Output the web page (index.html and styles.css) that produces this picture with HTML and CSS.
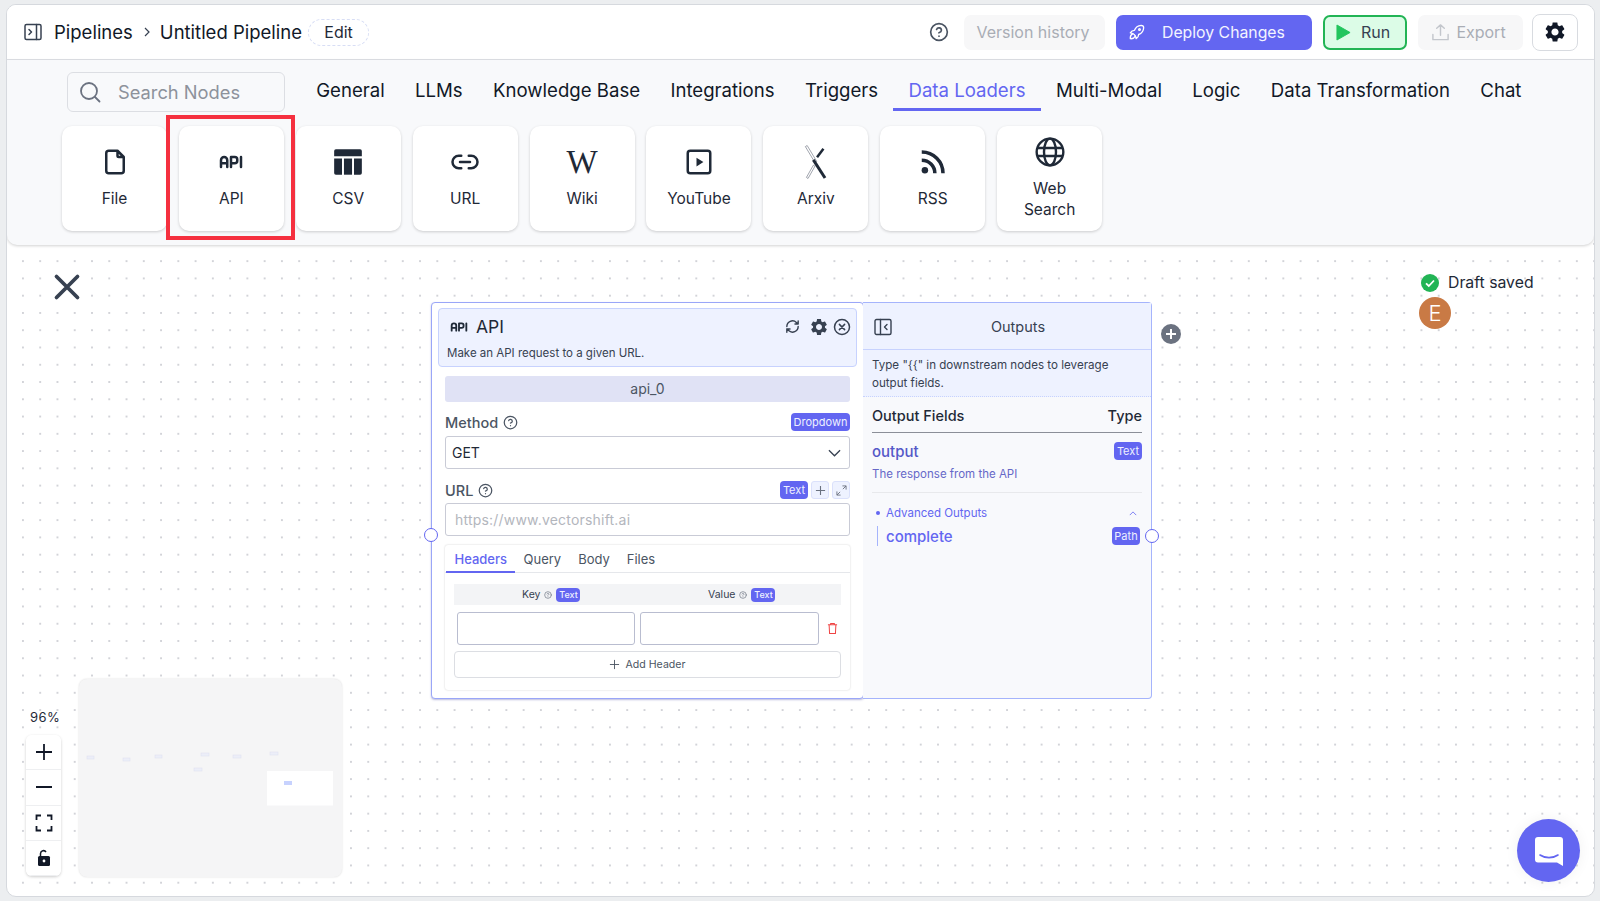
FILE: index.html
```html
<!DOCTYPE html>
<html lang="en">
<head>
    <meta charset="UTF-8">
    <meta name="viewport" content="width=device-width, initial-scale=1.0">
    <title>Untitled Pipeline</title>
    <link rel="stylesheet" href="styles.css">
</head>
<body>

<svg class="defs" width="0" height="0">
    <defs>
        <symbol id="i-api" viewBox="0 0 24 24"><path d="M4 13h5M12 16v-8h3a2 2 0 0 1 2 2v1a2 2 0 0 1-2 2h-3M20 8v8M9 16v-5.5a2.5 2.5 0 0 0-5 0v5.5" fill="none" stroke="currentColor" stroke-width="2" stroke-linecap="round" stroke-linejoin="round"/></symbol>
        <symbol id="i-help" viewBox="0 0 24 24"><g fill="none" stroke="currentColor" stroke-width="2" stroke-linecap="round" stroke-linejoin="round"><circle cx="12" cy="12" r="10"/><path d="M9.1 9a3 3 0 0 1 5.8 1c0 2-3 3-3 3M12 17h.01"/></g></symbol>
        <symbol id="i-gear" viewBox="0 0 24 24"><path fill="currentColor" d="M19.14 12.94c.04-.3.06-.61.06-.94 0-.32-.02-.64-.07-.94l2.03-1.58c.18-.14.23-.41.12-.61l-1.92-3.32c-.12-.22-.37-.29-.59-.22l-2.39.96c-.5-.38-1.03-.7-1.62-.94l-.36-2.54c-.04-.24-.24-.41-.48-.41h-3.84c-.24 0-.43.17-.47.41l-.36 2.54c-.59.24-1.13.57-1.62.94l-2.39-.96c-.22-.08-.47 0-.59.22L2.74 8.87c-.12.21-.08.47.12.61l2.03 1.58c-.05.3-.09.63-.09.94s.02.64.07.94l-2.03 1.58c-.18.14-.23.41-.12.61l1.92 3.32c.12.22.37.29.59.22l2.39-.96c.5.38 1.03.7 1.62.94l.36 2.54c.05.24.24.41.48.41h3.84c.24 0 .44-.17.47-.41l.36-2.54c.59-.24 1.13-.56 1.62-.94l2.39.96c.22.08.47 0 .59-.22l1.92-3.32c.12-.22.07-.47-.12-.61l-2.01-1.58zM12 15.6c-1.98 0-3.6-1.62-3.6-3.6s1.62-3.6 3.6-3.6 3.6 1.62 3.6 3.6-1.62 3.6-3.6 3.6z"/></symbol>
    </defs>
</svg>

<div class="app">

    <header class="topbar">
        <svg class="side-icon" viewBox="0 0 18 18" width="18" height="18"><g fill="none" stroke="#374151" stroke-width="1.5" stroke-linejoin="round" stroke-linecap="round"><rect x="1" y="1.5" width="16" height="15" rx="1.5"/><path d="M12.5 1.5v15M5 6.5l2.5 2.5L5 11.5"/></g></svg>
        <span class="crumb">Pipelines</span>
        <svg class="crumb-sep" viewBox="0 0 10 10" width="10" height="10"><path d="M3 1l4 4-4 4" fill="none" stroke="#374151" stroke-width="1.2"/></svg>
        <span class="crumb">Untitled Pipeline</span>
        <button class="edit-btn">Edit</button>

        <div class="top-actions">
            <svg class="top-help" width="20" height="20"><use href="#i-help"/></svg>
            <button class="top-btn muted version">Version history</button>
            <button class="top-btn deploy">
                <svg viewBox="0 0 24 24" width="20" height="20"><g fill="none" stroke="#fff" stroke-width="1.6" stroke-linecap="round" stroke-linejoin="round"><path d="M4 13a8 8 0 0 1 7 7a6 6 0 0 0 3-5a9 9 0 0 0 6-8a3 3 0 0 0-3-3a9 9 0 0 0-8 6a6 6 0 0 0-5 3"/><path d="M7 14a6 6 0 0 0-3 6a6 6 0 0 0 6-3"/><circle cx="15" cy="9" r="1"/></g></svg>
                <span>Deploy Changes</span>
            </button>
            <button class="top-btn run">
                <svg viewBox="0 0 16 18" width="15" height="17"><path d="M1 1l14 8-14 8z" fill="#22c55e" stroke="#22c55e" stroke-linejoin="round"/></svg>
                <span>Run</span>
            </button>
            <button class="top-btn muted export">
                <svg viewBox="0 0 20 20" width="19" height="19"><path d="M10 13V2M6 5.5L10 2l4 3.5M2 12v5.5h16V12" fill="none" stroke="#c3c6cc" stroke-width="1.5" stroke-linecap="round" stroke-linejoin="round"/></svg>
                <span>Export</span>
            </button>
            <button class="gear-btn"><svg width="24" height="24"><use href="#i-gear"/></svg></button>
        </div>
    </header>

    <section class="toolbar">
        <div class="tool-row">
            <div class="search">
                <svg viewBox="0 0 24 24" width="24" height="24"><g fill="none" stroke="#6b7280" stroke-width="1.8" stroke-linecap="round"><circle cx="11" cy="11" r="8"/><path d="M17 17l4.5 4.5"/></g></svg>
                <span>Search Nodes</span>
            </div>
            <nav class="tabs">
                <a>General</a>
                <a>LLMs</a>
                <a>Knowledge Base</a>
                <a>Integrations</a>
                <a>Triggers</a>
                <a class="active">Data Loaders</a>
                <a>Multi-Modal</a>
                <a>Logic</a>
                <a>Data Transformation</a>
                <a>Chat</a>
            </nav>
        </div>

        <div class="cards">
            <div class="card">
                <svg viewBox="0 0 24 24" width="30" height="30"><path d="M14 3v4a1 1 0 0 0 1 1h4M17 21h-10a2 2 0 0 1-2-2v-14a2 2 0 0 1 2-2h7l5 5v11a2 2 0 0 1-2 2z" fill="none" stroke="#1f2937" stroke-width="2" stroke-linejoin="round"/></svg>
                <span>File</span>
            </div>
            <div class="card">
                <svg class="card-api" width="30" height="30"><use href="#i-api"/></svg>
                <span>API</span>
            </div>
            <div class="card">
                <svg viewBox="0 0 26 26" width="30" height="30"><g fill="#1f2937"><path d="M1 3.5a1.5 1.5 0 0 1 1.5-1.5h21a1.5 1.5 0 0 1 1.5 1.5V8H1z"/><path d="M1 10h6.8v14H2.5A1.5 1.5 0 0 1 1 22.5z"/><rect x="9.5" y="10" width="7" height="14"/><path d="M18.2 10H25v12.5a1.5 1.5 0 0 1-1.5 1.5h-5.3z"/></g></svg>
                <span>CSV</span>
            </div>
            <div class="card">
                <svg viewBox="0 0 24 24" width="30" height="30"><path d="M9 17H7A5 5 0 0 1 7 7h2M15 7h2a5 5 0 1 1 0 10h-2M8 12h8" fill="none" stroke="#1f2937" stroke-width="2" stroke-linecap="round"/></svg>
                <span>URL</span>
            </div>
            <div class="card">
                <div class="wiki-w">W</div>
                <span>Wiki</span>
            </div>
            <div class="card">
                <svg viewBox="0 0 24 24" width="30" height="30"><rect x="3" y="3" width="18" height="18" rx="2" fill="none" stroke="#1f2937" stroke-width="2"/><path d="M10 8.5l5.5 3.5-5.5 3.5z" fill="#1f2937"/></svg>
                <span>YouTube</span>
            </div>
            <div class="card">
                <svg class="arxiv" viewBox="0 0 24 32" width="26" height="34"><path d="M2 1.5l1.7-1 9 15-1.7 1zM9.5 19l-6.5 11.5 1.5 1 6.5-11.5z" fill="#fff" stroke="#6b7280" stroke-width=".6"/><path d="M19 3.5l-6 8" stroke="#1f2937" stroke-width="2.4" fill="none"/><path d="M9.5 14l11 17" stroke="#1f2937" stroke-width="2.8" fill="none"/></svg>
                <span>Arxiv</span>
            </div>
            <div class="card">
                <svg viewBox="0 0 24 24" width="30" height="30"><g fill="none" stroke="#1f2937" stroke-width="2.8"><path d="M3 10.5a10.5 10.5 0 0 1 10.5 10.5"/><path d="M3 4a17 17 0 0 1 17 17"/></g><circle cx="5.5" cy="18.5" r="2.6" fill="#1f2937"/></svg>
                <span>RSS</span>
            </div>
            <div class="card card-two">
                <svg viewBox="0 0 24 24" width="32" height="32"><g fill="none" stroke="#1f2937" stroke-width="1.8"><circle cx="12" cy="12" r="10"/><ellipse cx="12" cy="12" rx="4.5" ry="10"/><path d="M2.5 9h19M2.5 15h19"/></g></svg>
                <span>Web<br>Search</span>
            </div>
        </div>

        <div class="red-box"></div>
    </section>

    <main class="canvas">
        <svg class="close-x" viewBox="0 0 24 24" width="28" height="28"><path d="M3 3l18 18M21 3L3 21" stroke="#374151" stroke-width="3.2" stroke-linecap="round"/></svg>

        <div class="saved">
            <svg viewBox="0 0 18 18" width="18" height="18"><circle cx="9" cy="9" r="9" fill="#22b455"/><path d="M5 9.3l2.8 2.7L13 6.5" fill="none" stroke="#fff" stroke-width="1.8"/></svg>
            <span>Draft saved</span>
        </div>
        <div class="avatar">E</div>

        <div class="node">
            <div class="node-head">
                <div class="node-title">
                    <svg class="head-api" width="22" height="22"><use href="#i-api"/></svg>
                    <span>API</span>
                    <div class="node-tools">
                        <svg class="tool-sync" viewBox="0 0 24 24" width="17" height="17"><path d="M4 12a8 8 0 0 1 13.5-5.8L20 8.5M20 4v4.5h-4.5M20 12a8 8 0 0 1-13.5 5.8L4 15.5M4 20v-4.5h4.5" fill="none" stroke="#374151" stroke-width="2" stroke-linecap="round" stroke-linejoin="round"/></svg>
                        <svg class="tool-gear" width="20" height="20"><use href="#i-gear"/></svg>
                        <svg viewBox="0 0 24 24" width="18" height="18"><g fill="none" stroke="#374151" stroke-width="2" stroke-linecap="round"><circle cx="12" cy="12" r="10"/><path d="M8.5 8.5l7 7M15.5 8.5l-7 7"/></g></svg>
                    </div>
                </div>
                <p>Make an API request to a given URL.</p>
            </div>

            <div class="node-body">
                <div class="node-id">api_0</div>

                <div class="field-head first">
                    <span class="field-label">Method</span>
                    <svg class="field-help" width="15" height="15"><use href="#i-help"/></svg>
                    <span class="badge badge-wide">Dropdown</span>
                </div>
                <div class="select">
                    <span>GET</span>
                    <svg viewBox="0 0 14 8" width="13" height="8"><path d="M1 1l6 6 6-6" fill="none" stroke="#374151" stroke-width="1.4"/></svg>
                </div>

                <div class="field-head">
                    <span class="field-label">URL</span>
                    <svg class="field-help" width="15" height="15"><use href="#i-help"/></svg>
                    <span class="badge">Text</span>
                    <span class="mini-btn"><svg viewBox="0 0 12 12" width="11" height="11"><path d="M6 1v10M1 6h10" stroke="#6b7280" stroke-width="1.2"/></svg></span>
                    <span class="mini-btn"><svg viewBox="0 0 12 12" width="11" height="11"><path d="M7 1h4v4M11 1L7.5 4.5M5 11H1V7M1 11l3.5-3.5" fill="none" stroke="#6b7280" stroke-width="1"/></svg></span>
                </div>
                <div class="url-input">https://www.vectorshift.ai</div>

                <div class="req-panel">
                    <div class="req-tabs">
                        <a class="active">Headers</a>
                        <a>Query</a>
                        <a>Body</a>
                        <a>Files</a>
                    </div>
                    <div class="req-body">
                        <div class="kv-head">
                            <div class="kv-col">
                                <span>Key</span>
                                <svg width="8" height="8"><use href="#i-help"/></svg>
                                <b class="badge badge-tiny">Text</b>
                            </div>
                            <div class="kv-col">
                                <span>Value</span>
                                <svg width="8" height="8"><use href="#i-help"/></svg>
                                <b class="badge badge-tiny">Text</b>
                            </div>
                        </div>
                        <div class="kv-row">
                            <div class="kv-input"></div>
                            <div class="kv-input"></div>
                            <svg viewBox="0 0 12 14" width="11" height="13"><path d="M1 3h10M4 3V1.5h4V3M2.3 3l.5 9.5h6.4l.5-9.5" fill="none" stroke="#ef4444" stroke-width="1.1"/></svg>
                        </div>
                        <div class="add-header">
                            <svg viewBox="0 0 12 12" width="11" height="11"><path d="M6 1v10M1 6h10" stroke="#4b5563" stroke-width="1"/></svg>
                            <span>Add Header</span>
                        </div>
                    </div>
                </div>
            </div>
            <span class="handle handle-left"></span>
        </div>

        <div class="outputs">
            <div class="out-head">
                <svg viewBox="0 0 18 18" width="18" height="18"><g fill="none" stroke="#374151" stroke-width="1.4" stroke-linejoin="round" stroke-linecap="round"><rect x="1" y="1.5" width="16" height="15" rx="1.5"/><path d="M6.5 1.5v15M13 6.5L10.5 9l2.5 2.5"/></g></svg>
                <span>Outputs</span>
            </div>
            <p class="out-note">Type "{{" in downstream nodes to leverage output fields.</p>
            <div class="out-body">
                <div class="out-cols">
                    <span>Output Fields</span>
                    <span>Type</span>
                </div>
                <div class="out-row">
                    <span class="out-name">output</span>
                    <span class="badge">Text</span>
                </div>
                <div class="out-desc">The response from the API</div>
                <div class="adv-row">
                    <i class="adv-dot"></i>
                    <span>Advanced Outputs</span>
                    <svg viewBox="0 0 10 6" width="8" height="5"><path d="M1 5l4-4 4 4" fill="none" stroke="#6366f1" stroke-width="1"/></svg>
                </div>
                <div class="adv-item">
                    <span>complete</span>
                    <span class="badge">Path</span>
                </div>
            </div>
            <span class="handle handle-right"></span>
        </div>

        <div class="add-node">
            <svg viewBox="0 0 12 12" width="12" height="12"><path d="M6 1v10M1 6h10" stroke="#fff" stroke-width="2"/></svg>
        </div>

        <div class="zoom-box">
            <div class="zoom-pct">96%</div>
            <div class="zoom-btns">
                <button><svg viewBox="0 0 18 18" width="18" height="18"><path d="M9 1v16M1 9h16" stroke="#111827" stroke-width="1.8"/></svg></button>
                <button><svg viewBox="0 0 18 18" width="18" height="18"><path d="M1 9h16" stroke="#111827" stroke-width="1.8"/></svg></button>
                <button><svg viewBox="0 0 18 18" width="18" height="18"><path d="M1.5 6V1.5H6M12 1.5h4.5V6M16.5 12v4.5H12M6 16.5H1.5V12" fill="none" stroke="#111827" stroke-width="1.8"/></svg></button>
                <button><svg viewBox="0 0 14 18" width="14" height="18"><path d="M3.5 7V4.5a3 3 0 0 1 5.500-1.500" fill="none" stroke="#111827" stroke-width="1.5"/><rect x="1" y="7" width="12" height="10" rx="1.5" fill="#111827"/><circle cx="7" cy="12" r="1.4" fill="#fff"/></svg></button>
            </div>
        </div>

        <svg class="minimap" viewBox="0 0 263 198" width="263" height="198">
            <rect x="188" y="92" width="66" height="34.5" fill="#fff"/>
            <g fill="#eceef8" stroke="#dde0f0" stroke-width=".5">
                <rect x="8" y="77" width="7" height="3"/>
                <rect x="44" y="79" width="7" height="3"/>
                <rect x="76" y="76" width="7" height="3"/>
                <rect x="122" y="74" width="8" height="3"/>
                <rect x="154" y="76" width="8" height="3"/>
                <rect x="191" y="73" width="8" height="3"/>
                <rect x="115" y="89" width="8" height="3"/>
            </g>
            <rect x="205" y="102" width="8" height="4" fill="#c7d2fe"/>
        </svg>

        <div class="chat-bubble">
            <svg viewBox="0 0 28 32" width="28" height="32"><path d="M3 2h22a3 3 0 0 1 3 3v26l-6-3.5H3a3 3 0 0 1-3-3V5a3 3 0 0 1 3-3z" fill="#fff"/><path d="M5 20c5 3.5 13 3.5 18 0" fill="none" stroke="#6366f1" stroke-width="1.6" stroke-linecap="round"/></svg>
        </div>
    </main>

</div>

</body>
</html>
```

FILE: styles.css
```css
* {
    box-sizing: border-box;
}

html, body {
    height: 100%;
}

body {
    margin: 0;
    padding: 4px 5px 4px 6px;
    background-color: #eceef0;
    font-family: Inter, "Noto Sans", sans-serif;
    color: #111827;
    overflow: hidden;
}

button {
    font-family: inherit;
    cursor: pointer;
}

.defs {
    position: absolute;
}

.app {
    height: 100%;
    display: flex;
    flex-direction: column;
    border: 1px solid #d6d9de;
    border-radius: 10px;
    overflow: hidden;
    background-color: #fff;
    background-image: radial-gradient(circle, #d2d3d8 0.7px, transparent 1.1px);
    background-size: 17.28px 17.28px;
    background-position: 7.3px 5.8px;
}

/* top bar */
.topbar {
    flex: none;
    height: 55px;
    padding-left: 17px;
    display: flex;
    align-items: center;
    background-color: #fff;
    border-bottom: 1px solid #dfe1e6;
}

.side-icon {
    margin-right: 12px;
}

.crumb {
    font-size: 18.5px;
    color: #111827;
}

.crumb-sep {
    margin: 0 8px 0 9px;
}

.edit-btn {
    margin-left: 6px;
    width: 61px;
    height: 27px;
    background: #fff;
    border: 1px dashed #d8def5;
    border-radius: 14px;
    font-size: 16px;
    color: #1f2937;
}

.top-actions {
    margin-left: auto;
    padding-right: 16px;
    display: flex;
    align-items: center;
    gap: 11px;
}

.top-help {
    margin-right: 4px;
    color: #4b5563;
}

.top-btn {
    height: 35px;
    display: flex;
    align-items: center;
    justify-content: center;
    border: none;
    border-radius: 7px;
    font-size: 16px;
}

.top-btn.muted {
    background-color: #f7f7f8;
    color: #a9adb5;
}

.version {
    width: 141px;
    padding: 0 3px 0 0;
}

.deploy {
    width: 196px;
    padding-left: 11px;
    justify-content: flex-start;
    gap: 15px;
    background-color: #6366f1;
    color: #f3f4ff;
    font-size: 15.8px;
}

.run {
    width: 84px;
    padding: 0 4px 0 0;
    gap: 10px;
    background-color: #dcfce7;
    border: 2px solid #22b455;
    color: #374151;
}

.export {
    width: 105px;
    padding: 0 4px 0 0;
    gap: 6px;
}

.gear-btn {
    margin-left: -2px;
    width: 46px;
    height: 37px;
    display: flex;
    align-items: center;
    justify-content: center;
    background: #fff;
    border: 1.5px solid #d8dbe0;
    border-radius: 8px;
    color: #111827;
}

/* node toolbar */
.toolbar {
    flex: none;
    position: relative;
    height: 185px;
    background-color: #f8f9fb;
    border-radius: 0 0 10px 10px;
    box-shadow: 0 1px 3px rgba(0, 0, 0, 0.18);
}

.tool-row {
    padding: 12px 0 0 60px;
    display: flex;
}

.search {
    width: 218px;
    height: 40px;
    padding-left: 10px;
    display: flex;
    align-items: center;
    gap: 16px;
    border: 1px solid #dcdee3;
    border-radius: 6px;
    font-size: 18.3px;
    color: #8d929b;
}

.tabs {
    margin-left: 16px;
    height: 39px;
    display: flex;
}

.tabs a {
    padding: 5px 15.2px 0;
    font-size: 18.6px;
    line-height: 27px;
    color: #111827;
}

.tabs a.active {
    color: #6366f1;
    border-bottom: 3px solid #6366f1;
}

.cards {
    margin-top: 14px;
    padding-left: 55px;
    display: flex;
    gap: 11.9px;
}

.card {
    width: 105px;
    height: 105px;
    padding-top: 21px;
    display: flex;
    flex-direction: column;
    align-items: center;
    background-color: #fff;
    border-radius: 10px;
    box-shadow: 0 1px 3px rgba(0, 0, 0, 0.18);
    font-size: 15.5px;
    color: #1f2937;
    text-align: center;
}

.card span {
    margin-top: 11px;
    line-height: 21px;
}

.card-two {
    padding-top: 10px;
}

.card-two span {
    margin-top: 10px;
}

.card-api {
    color: #1f2937;
}

.arxiv {
    margin: -2px 0;
}

.wiki-w {
    height: 30px;
    font-family: "Liberation Serif", serif;
    font-size: 33px;
    line-height: 30px;
    color: #1f2937;
}

.red-box {
    position: absolute;
    left: 159px;
    top: 55px;
    width: 129px;
    height: 125px;
    border: 4px solid #f5303f;
}

/* canvas */
.canvas {
    flex: 1;
    position: relative;
}

.close-x {
    position: absolute;
    left: 46px;
    top: 28px;
}

.saved {
    position: absolute;
    left: 1414px;
    top: 28px;
    display: flex;
    align-items: center;
    gap: 9px;
    font-size: 15.8px;
    color: #1f2937;
}

.avatar {
    position: absolute;
    left: 1412px;
    top: 52px;
    width: 32px;
    height: 32px;
    display: flex;
    align-items: center;
    justify-content: center;
    background-color: #c97a45;
    border-radius: 50%;
    font-size: 22px;
    font-weight: 300;
    color: #fff;
}

.node, .outputs {
    position: absolute;
    top: 57px;
    height: 397px;
    border: 1.5px solid #a5b4fc;
    border-radius: 4px;
}

.node {
    left: 424px;
    width: 433px;
    padding: 5px 6px;
    background-color: #fff;
    box-shadow: 0 1px 2px rgba(60, 60, 160, 0.35);
    border-color: #9aa6f8;
}

.node-head {
    height: 59px;
    padding: 6px 5px 6px 8px;
    background-color: #eef2ff;
    border: 1px solid #c7d2fe;
    border-radius: 4px;
}

.node-title {
    display: flex;
    align-items: center;
    gap: 6px;
    height: 23px;
    font-size: 17.5px;
    color: #1f2937;
}

.head-api {
    margin-left: 1px;
    color: #1f2937;
}

.node-tools {
    margin-left: auto;
    display: flex;
    align-items: center;
    gap: 7px;
    color: #374151;
}

.tool-sync {
    margin-right: 1px;
}

.tool-gear {
    margin-right: -3px;
}

.node-head p {
    margin: 8px 0 0;
    font-size: 11.5px;
    line-height: 14px;
    color: #374151;
}

.node-body {
    padding: 9px 7px 0;
}

.node-id {
    height: 26px;
    line-height: 26px;
    background-color: #e0e2f5;
    border-radius: 3px;
    font-size: 14px;
    text-align: center;
    color: #4b5563;
}

.field-head {
    margin-top: 12px;
    height: 18px;
    display: flex;
    align-items: center;
}

.field-head.first {
    margin-top: 11px;
}

.field-head.first + .select {
    margin-top: 5px;
}

.field-label {
    font-size: 14.5px;
    font-weight: 500;
    color: #4b5563;
}

.field-help {
    margin: 0 auto 0 5px;
    color: #4b5563;
}

.badge {
    width: 28px;
    height: 18px;
    display: inline-flex;
    align-items: center;
    justify-content: center;
    background-color: #6366f1;
    border-radius: 4px;
    font-size: 11px;
    color: #eef0ff;
}

.badge-wide {
    width: 59px;
    font-size: 11px;
}

.badge-tiny {
    width: 24px;
    height: 14px;
    font-size: 9px;
    font-weight: 500;
}

.mini-btn {
    margin-left: 3px;
    width: 18px;
    height: 18px;
    display: flex;
    align-items: center;
    justify-content: center;
    background-color: #eef2ff;
    border: 1px solid #dbe1fb;
    border-radius: 3px;
}

.select, .url-input {
    margin-top: 4px;
    padding: 0 6px;
    display: flex;
    align-items: center;
    justify-content: space-between;
    border: 1px solid #c9cbd6;
    border-radius: 3px;
    font-size: 14px;
    color: #1f2937;
}

.select {
    height: 33px;
    padding-right: 8px;
}

.url-input {
    height: 33px;
    padding-left: 9px;
    color: #b3b6bd;
    letter-spacing: 0.2px;
}

.req-panel {
    margin-top: 9px;
    height: 145px;
    border-radius: 3px;
    box-shadow: 0 0 2px rgba(0, 0, 0, 0.2);
}

.req-tabs {
    height: 28px;
    padding-left: 1px;
    display: flex;
    border-bottom: 1px solid #e5e7eb;
    font-size: 13px;
    color: #4b5563;
}

.req-tabs a {
    padding: 6px 8.5px 0;
    height: 28px;
}

.req-tabs a.active {
    width: 69px;
    color: #6366f1;
    font-weight: 500;
    border-bottom: 2px solid #6366f1;
}

.req-body {
    padding: 11px 9px 0;
}

.kv-head {
    height: 21px;
    display: flex;
    background-color: #f3f4f6;
    font-size: 10.5px;
    color: #374151;
}

.kv-col {
    flex: 1;
    display: flex;
    align-items: center;
    justify-content: center;
    gap: 4px;
}

.kv-col:first-child {
    padding-left: 2px;
}

.kv-col:last-child {
    padding-right: 4px;
}

.kv-col svg {
    color: #6b7280;
}

.kv-row {
    margin-top: 7px;
    padding-left: 2.5px;
    display: flex;
    align-items: center;
    gap: 5px;
}

.kv-input {
    width: 178.5px;
    height: 33px;
    border: 1px solid #b9bdd0;
    border-radius: 3px;
}

.kv-row svg {
    margin-left: 3px;
}

.add-header {
    margin-top: 6px;
    height: 27px;
    display: flex;
    align-items: center;
    justify-content: center;
    gap: 5px;
    border: 1px solid #dcdee3;
    border-radius: 4px;
    font-size: 10.6px;
    color: #4b5563;
}

.outputs {
    left: 856px;
    width: 289px;
    background-color: #f8f9fc;
    border-left: none;
    border-radius: 0 4px 4px 0;
}

.out-head {
    height: 47px;
    position: relative;
    display: flex;
    align-items: center;
    justify-content: center;
    background-color: #eef2ff;
    border-bottom: 1px solid #c7d2fe;
    font-size: 14.5px;
    color: #374151;
    padding-left: 22px;
}

.out-head svg {
    position: absolute;
    left: 11px;
    top: 15px;
}

.out-note {
    margin: 0;
    height: 47px;
    padding: 6px 30px 0 9px;
    background-color: #eef2ff;
    border-bottom: 1px dotted #c7d2fe;
    font-size: 11.6px;
    line-height: 18px;
    color: #374151;
}

.out-body {
    padding: 0 9px;
}

.out-cols {
    height: 36px;
    padding-top: 2px;
    display: flex;
    align-items: center;
    justify-content: space-between;
    border-bottom: 1px solid #8b8f98;
    font-size: 14.5px;
    font-weight: 500;
    color: #1f2937;
}

.out-row {
    margin-top: 9px;
    height: 18px;
    display: flex;
    align-items: center;
    justify-content: space-between;
}

.out-name {
    font-size: 15px;
    font-weight: 500;
    color: #5558c8;
}

.out-desc {
    margin-top: 6px;
    height: 27px;
    line-height: 17px;
    border-bottom: 1px solid #e8e9ec;
    font-size: 11.5px;
    color: #6668c8;
    padding-bottom: 9px;
}

.adv-row {
    margin-top: 12px;
    height: 16px;
    padding-left: 4px;
    display: flex;
    align-items: center;
    gap: 6px;
    font-size: 11.5px;
    color: #6366f1;
}

.adv-row svg {
    margin-left: auto;
    margin-right: 5px;
}

.adv-dot {
    width: 4px;
    height: 4px;
    background-color: #6366f1;
    border-radius: 50%;
}

.adv-item {
    margin: 5px 2px 0 5px;
    height: 20px;
    padding-left: 8px;
    display: flex;
    align-items: center;
    justify-content: space-between;
    border-left: 1px solid #a5b4fc;
    font-size: 15px;
    font-weight: 500;
    color: #6366f1;
}

.adv-item .badge {
    font-weight: 400;
}

.handle {
    position: absolute;
    width: 14px;
    height: 14px;
    background-color: #fff;
    border: 1.5px solid #6366f1;
    border-radius: 50%;
}

.handle-left {
    left: -8px;
    top: 225px;
}

.handle-right {
    right: -8px;
    top: 226px;
}

.add-node {
    position: absolute;
    left: 1154px;
    top: 79px;
    width: 20px;
    height: 20px;
    display: flex;
    align-items: center;
    justify-content: center;
    background-color: #6b7280;
    border-radius: 50%;
}

/* zoom controls and minimap */
.zoom-box {
    position: absolute;
    left: 19px;
    top: 464px;
    width: 35px;
}

.zoom-pct {
    height: 26px;
    padding-left: 4px;
    font-size: 13px;
    line-height: 16px;
    white-space: nowrap;
    color: #1f2937;
    letter-spacing: 0.4px;
}

.zoom-btns {
    display: flex;
    flex-direction: column;
    border-radius: 6px;
    overflow: hidden;
    box-shadow: 0 1px 3px rgba(0, 0, 0, 0.2);
}

.zoom-btns button {
    height: 35.3px;
    padding: 0;
    display: flex;
    align-items: center;
    justify-content: center;
    background-color: #fff;
    border: none;
    border-bottom: 1px solid #eeeff1;
}

.minimap {
    position: absolute;
    left: 72px;
    top: 434px;
    background-color: #f5f5f6;
    border-radius: 8px;
    box-shadow: 0 0 2px rgba(0, 0, 0, 0.15);
}

.chat-bubble {
    position: absolute;
    left: 1510px;
    top: 574px;
    width: 63px;
    height: 63px;
    display: flex;
    align-items: center;
    justify-content: center;
    background-color: #6366f1;
    border-radius: 50%;
    box-shadow: 0 0 14px rgba(0, 0, 0, 0.06);
}
```
